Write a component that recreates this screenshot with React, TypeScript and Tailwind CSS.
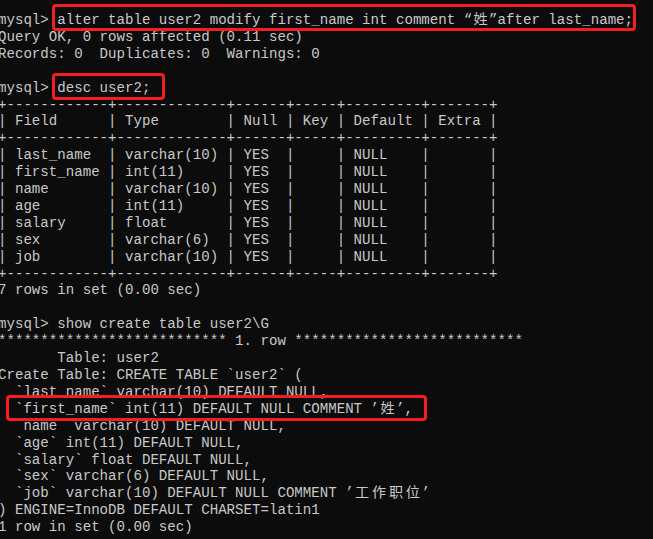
import React from "react";

const lines: string[] = [
  "mysql> alter table user2 modify first_name int comment “姓”after last_name;",
  "Query OK, 0 rows affected (0.11 sec)",
  "Records: 0  Duplicates: 0  Warnings: 0",
  "",
  "mysql> desc user2;",
  "+------------+-------------+------+-----+---------+-------+",
  "| Field      | Type        | Null | Key | Default | Extra |",
  "+------------+-------------+------+-----+---------+-------+",
  "| last_name  | varchar(10) | YES  |     | NULL    |       |",
  "| first_name | int(11)     | YES  |     | NULL    |       |",
  "| name       | varchar(10) | YES  |     | NULL    |       |",
  "| age        | int(11)     | YES  |     | NULL    |       |",
  "| salary     | float       | YES  |     | NULL    |       |",
  "| sex        | varchar(6)  | YES  |     | NULL    |       |",
  "| job        | varchar(10) | YES  |     | NULL    |       |",
  "+------------+-------------+------+-----+---------+-------+",
  "7 rows in set (0.00 sec)",
  "",
  "mysql> show create table user2\\G",
  "*************************** 1. row ***************************",
  "       Table: user2",
  "Create Table: CREATE TABLE `user2` (",
  "  `last_name` varchar(10) DEFAULT NULL,",
  "  `first_name` int(11) DEFAULT NULL COMMENT ’姓’,",
  "  `name` varchar(10) DEFAULT NULL,",
  "  `age` int(11) DEFAULT NULL,",
  "  `salary` float DEFAULT NULL,",
  "  `sex` varchar(6) DEFAULT NULL,",
  "  `job` varchar(10) DEFAULT NULL COMMENT ’工作职位’",
  ") ENGINE=InnoDB DEFAULT CHARSET=latin1",
  "1 row in set (0.00 sec)",
];

function renderLine(line: string) {
  const parts: React.ReactNode[] = [];
  let buf = "";
  let k = 0;
  for (const ch of line) {
    if (ch.charCodeAt(0) >= 0x2e80) {
      if (buf) {
        parts.push(<span key={k++}>{buf}</span>);
        buf = "";
      }
      parts.push(
        <span key={k++} className="inline-block w-[16.94px] text-center">
          {ch}
        </span>
      );
    } else {
      buf += ch;
    }
  }
  if (buf) parts.push(<span key={k++}>{buf}</span>);
  return parts;
}

export default function App() {
  return (
    <div
      className="relative w-[653px] h-[539px] overflow-hidden bg-[#0c0c0c] text-[#c8c8c8] text-[14.11px] leading-[16.9px]"
      style={{ fontFamily: "'Liberation Mono', 'Noto Sans CJK SC', monospace" }}
    >
      <div className="pt-[12px] ml-[-2px]">
        {lines.map((l, i) => (
          <div key={i} className="whitespace-pre min-h-[16.9px]">
            {renderLine(l)}
          </div>
        ))}
      </div>
      <div className="absolute left-[52px] top-[4px] w-[584px] h-[27px] border-[3px] border-[#f51d1d] rounded-[4px]" />
      <div className="absolute left-[52px] top-[73px] w-[113px] h-[27px] border-[3px] border-[#f51d1d] rounded-[4px]" />
      <div className="absolute left-[6px] top-[395px] w-[421px] h-[26px] border-[3px] border-[#f51d1d] rounded-[4px]" />
    </div>
  );
}
